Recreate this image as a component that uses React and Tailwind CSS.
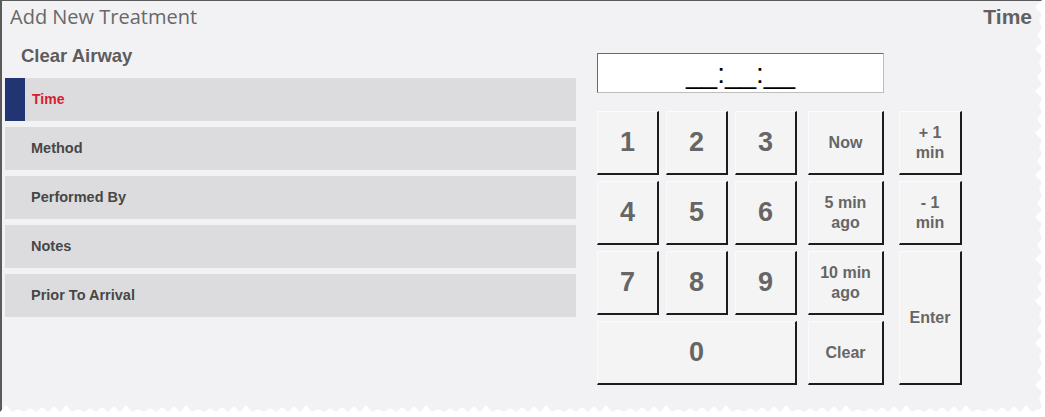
import React from "react";

const rows = ["Time", "Method", "Performed By", "Notes", "Prior To Arrival"];

// jagged torn-paper edges (bottom and right)
const bottomTeeth = [];
for (let x = 0; x <= 1045; x += 12) {
  const peak = 405 + ((x * 7) % 5);
  bottomTeeth.push(`${x},${412 + ((x * 3) % 3)} ${x + 6},${peak}`);
}
const bottomPoints = `0,417 ${bottomTeeth.join(" ")} 1045,412 1045,417`;

const rightTeeth = [];
for (let y = 0; y <= 417; y += 14) {
  const dip = 1035 + ((y * 5) % 6);
  rightTeeth.push(`${1042 + ((y * 3) % 3)},${y} ${dip},${y + 7}`);
}
const rightPoints = `1045,0 ${rightTeeth.join(" ")} 1042,417 1045,417`;

function Key({ children, className = "", small = false }) {
  return (
    <button
      className={`flex items-center justify-center bg-[#f4f4f4] border-t border-l border-t-[#fbfbfb] border-l-[#fbfbfb] border-r-2 border-b-2 border-r-[#1c1c1c] border-b-[#1c1c1c] font-bold text-[#666] text-center ${
        small ? "text-[16px] leading-[20px]" : "text-[27px]"
      } ${className}`}
    >
      {children}
    </button>
  );
}

export default function App() {
  return (
    <div className="relative w-[1045px] h-[417px] bg-white overflow-hidden font-['Liberation_Sans',Arial,sans-serif]">
      <div className="h-full border-l-2 border-t border-[#5a5a5a] bg-[#f2f2f4] flex flex-col">
        {/* header */}
        <div className="h-[32px] flex items-center justify-between pl-[8px] pr-[13px]">
          <span className="font-['Open_Sans',sans-serif] text-[20px] text-[#686868]">
            Add New Treatment
          </span>
          <span className="font-bold text-[21px] text-[#616161]">Time</span>
        </div>

        <div className="flex">
          {/* left: treatment fields */}
          <div className="w-[571px] ml-[3px]">
            <div className="h-[45px] flex items-center pl-[16px] font-bold text-[18.5px] text-[#5c5c5c]">
              Clear Airway
            </div>
            <div className="flex flex-col gap-[6px]">
              {rows.map((r, i) => (
                <div key={r} className="h-[43px] flex items-center bg-[#dcdcde]">
                  {i === 0 ? (
                    <>
                      <div className="w-[20px] h-full bg-[#213572]" />
                      <span className="pl-[7px] font-bold text-[14px] text-[#d3202f]">{r}</span>
                    </>
                  ) : (
                    <span className="pl-[26px] font-bold text-[14.5px] text-[#474747]">{r}</span>
                  )}
                </div>
              ))}
            </div>
          </div>

          {/* right: time keypad */}
          <div className="ml-[21px] mt-[20px]">
            <div className="w-[287px] h-[40px] bg-white border border-[#bdbdbd] border-t-[#6a6a6a] border-l-[#6a6a6a] flex items-end justify-center pb-[2px] text-[28px] leading-[32px] text-black">
              __:__:__
            </div>

            <div className="mt-[18px] grid grid-cols-[62px_62px_62px_80px_71px] grid-rows-[64px_64px_64px_64px] gap-x-[7px] gap-y-[6px]">
              <Key>1</Key>
              <Key>2</Key>
              <Key>3</Key>
              <Key small className="w-[76px] justify-self-end">Now</Key>
              <Key small className="w-[63px] justify-self-end">+ 1<br />min</Key>

              <Key>4</Key>
              <Key>5</Key>
              <Key>6</Key>
              <Key small className="w-[76px] justify-self-end">5 min<br />ago</Key>
              <Key small className="w-[63px] justify-self-end">- 1<br />min</Key>

              <Key>7</Key>
              <Key>8</Key>
              <Key>9</Key>
              <Key small className="w-[76px] justify-self-end">10 min<br />ago</Key>
              <Key small className="w-[63px] justify-self-end row-span-2">Enter</Key>

              <Key className="col-span-3">0</Key>
              <Key small className="w-[76px] justify-self-end">Clear</Key>
            </div>
          </div>
        </div>
      </div>

      {/* torn edges over the panel */}
      <svg className="absolute inset-0 pointer-events-none" width="1045" height="417">
        <polygon points={bottomPoints} fill="#ffffff" />
        <polygon points={rightPoints} fill="#ffffff" />
      </svg>
    </div>
  );
}
